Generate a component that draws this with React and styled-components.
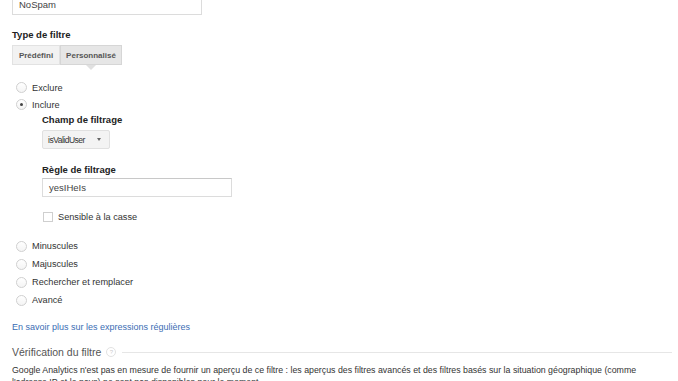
import React from "react";
import styled, { createGlobalStyle } from "styled-components";

const Global = createGlobalStyle`
  html, body { margin: 0; padding: 0; background: #fff; }
  body { font-family: "Liberation Sans", Arial, sans-serif; color: #333; overflow: hidden; }
`;

const Page = styled.div`
  padding: 0 12px;
  width: 678px;
  height: 381px;
  box-sizing: border-box;
  overflow: hidden;
  font-size: 9px;
`;

const TextInput = styled.div`
  box-sizing: border-box;
  width: ${(p) => p.$w}px;
  height: ${(p) => p.$h}px;
  margin-top: ${(p) => p.$mt}px;
  border: 1px solid #dcdcdc;
  border-top-color: #c8c8c8;
  padding: 0 6px;
  display: flex;
  align-items: center;
  font-size: 9.5px;
  color: #444;
  background: #fff;
`;

const Label = styled.div`
  font-weight: bold;
  font-size: 9.5px;
  line-height: 12px;
  color: #222;
  margin-top: ${(p) => p.$mt}px;
`;

const Tabs = styled.div`
  display: flex;
  margin-top: 4px;
  height: 20px;
`;

const Tab = styled.div`
  position: relative;
  box-sizing: border-box;
  height: 20px;
  width: ${(p) => p.$w}px;
  display: flex;
  align-items: center;
  justify-content: center;
  font-size: 8px;
  font-weight: bold;
  color: #555;
  background: ${(p) => (p.$active ? "#e6e6e6" : "#f2f2f2")};
  border: 1px solid ${(p) => (p.$active ? "#d6d6d6" : "#e2e2e2")};

  ${(p) =>
    p.$active &&
    `
    &::after {
      content: "";
      position: absolute;
      left: 50%;
      bottom: -6px;
      margin-left: -5px;
      border-left: 5px solid transparent;
      border-right: 5px solid transparent;
      border-top: 5px solid #e0e0e0;
    }
  `}
`;

const RadioList = styled.div`
  margin-top: ${(p) => p.$mt}px;
  display: flex;
  flex-direction: column;
`;

const RadioRow = styled.div`
  display: flex;
  align-items: center;
  height: ${(p) => p.$h}px;
  padding-left: 4px;
  color: #333;
  font-size: 9.2px;
`;

const Radio = styled.span`
  box-sizing: border-box;
  width: 11px;
  height: 11px;
  border-radius: 50%;
  border: 1px solid #d0d0d0;
  background: linear-gradient(#fff, #f4f4f4);
  margin-right: 5px;
  display: flex;
  align-items: center;
  justify-content: center;

  &::after {
    content: "";
    width: 3px;
    height: 3px;
    border-radius: 50%;
    background: ${(p) => (p.$checked ? "#444" : "transparent")};
  }
`;

const Sub = styled.div`
  padding-left: 30px;
`;

const Select = styled.div`
  box-sizing: border-box;
  margin-top: 4px;
  width: 68px;
  height: 19px;
  border: 1px solid #e0e0e0;
  border-radius: 2px;
  background: #f3f3f3;
  display: flex;
  align-items: center;
  justify-content: space-between;
  padding: 0 8px 0 5px;
  font-size: 8.5px;
  letter-spacing: -0.5px;
  color: #333;
`;

const Caret = styled.span`
  width: 0;
  height: 0;
  border-left: 2.5px solid transparent;
  border-right: 2.5px solid transparent;
  border-top: 3px solid #666;
`;

const CheckRow = styled.div`
  display: flex;
  align-items: center;
  height: 14px;
  margin-top: 13px;
  padding-left: 1px;
  color: #333;
  font-size: 9.2px;
`;

const Checkbox = styled.span`
  box-sizing: border-box;
  width: 10px;
  height: 10px;
  border: 1px solid #cfcfcf;
  background: #fff;
  margin-right: 5px;
`;

const Link = styled.a`
  display: block;
  margin-top: 12px;
  line-height: 12px;
  color: #3b6db4;
  text-decoration: none;
  font-size: 9px;
`;

const SectionHead = styled.div`
  display: flex;
  align-items: center;
  height: 14px;
  margin-top: 12px;
  font-size: 10.5px;
  color: #555;
`;

const Help = styled.span`
  box-sizing: border-box;
  width: 10px;
  height: 10px;
  border-radius: 50%;
  border: 1px solid #e2e2e2;
  margin-left: 5px;
  font-size: 6px;
  color: #ccc;
  display: flex;
  align-items: center;
  justify-content: center;
`;

const Rule = styled.span`
  flex: 1;
  height: 1px;
  background: #e6e6e6;
  margin-left: 6px;
  margin-right: -6px;
`;

const Para = styled.p`
  margin: 5px 0 0;
  font-size: 8.8px;
  line-height: 12px;
  color: #333;
  width: 660px;
`;

export default function App() {
  return (
    <>
      <Global />
      <Page>
        <TextInput $w={190} $h={21} $mt={-6}>NoSpam</TextInput>
        <Label $mt={14}>Type de filtre</Label>
        <Tabs>
          <Tab $w={48}>Prédéfini</Tab>
          <Tab $w={62} $active>Personnalisé</Tab>
        </Tabs>
        <RadioList $mt={14}>
          <RadioRow $h={17}><Radio />Exclure</RadioRow>
          <RadioRow $h={17}><Radio $checked />Inclure</RadioRow>
        </RadioList>
        <Sub>
          <Label $mt={1}>Champ de filtrage</Label>
          <Select>
            <span>isValidUser</span>
            <Caret />
          </Select>
          <Label $mt={15}>Règle de filtrage</Label>
          <TextInput $w={190} $h={19} $mt={2}>yesIHeIs</TextInput>
          <CheckRow>
            <Checkbox />
            Sensible à la casse
          </CheckRow>
        </Sub>
        <RadioList $mt={13}>
          <RadioRow $h={18}><Radio />Minuscules</RadioRow>
          <RadioRow $h={18}><Radio />Majuscules</RadioRow>
          <RadioRow $h={18}><Radio />Rechercher et remplacer</RadioRow>
          <RadioRow $h={18}><Radio />Avancé</RadioRow>
        </RadioList>
        <Link href="#">En savoir plus sur les expressions régulières</Link>
        <SectionHead>
          Vérification du filtre
          <Help>?</Help>
          <Rule />
        </SectionHead>
        <Para>
          Google Analytics n'est pas en mesure de fournir un aperçu de ce filtre : les aperçus des filtres avancés et des filtres basés sur la situation géographique (comme l'adresse IP et le pays) ne sont pas disponibles pour le moment.
        </Para>
      </Page>
    </>
  );
}
